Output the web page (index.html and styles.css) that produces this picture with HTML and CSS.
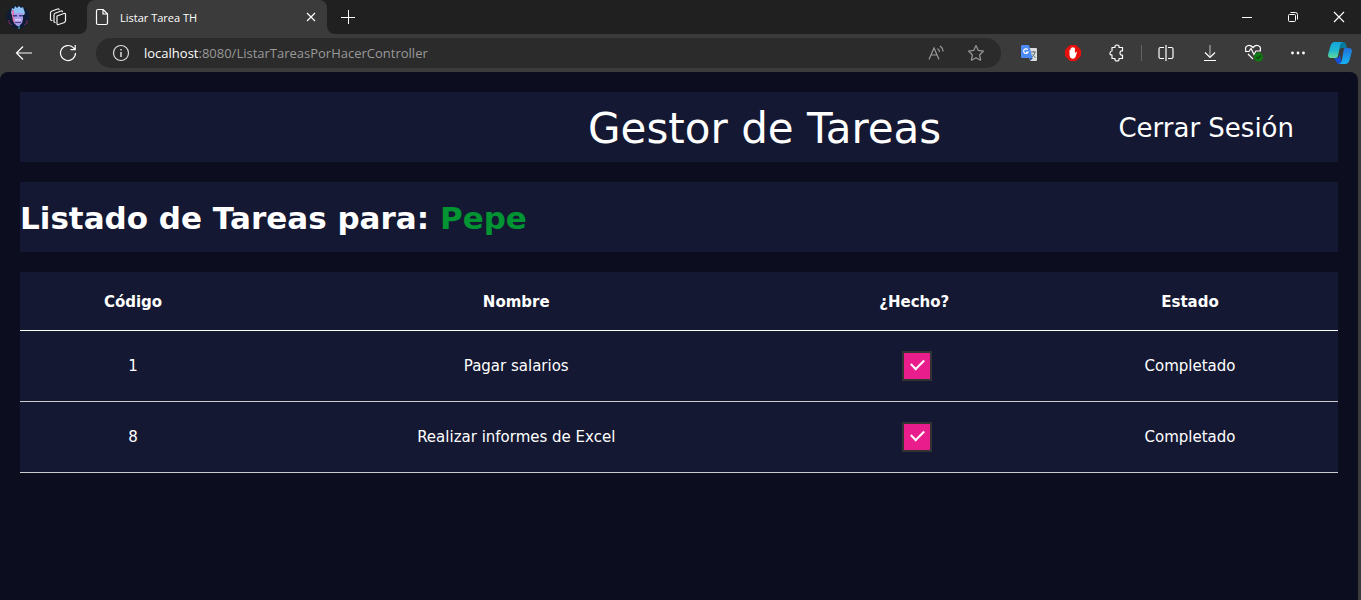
FILE: index.html
```html
<!DOCTYPE html>
<html lang="es">
<head>
<meta charset="utf-8">
<title>Listar Tarea TH</title>
<link rel="stylesheet" href="styles.css">
</head>
<body>
<div class="browser">
  <div class="tabstrip">
    <div class="tabstrip-start">
      <button class="icon-btn" aria-label="Perfil">
        <svg width="24" height="24" viewBox="0 0 24 24"><circle cx="12" cy="12" r="11.5" fill="#101c35"/><path d="M5 8 6 3l2 1 1-3 2 2 2-2 2 2 2-1 1 3 1 3-1 2H6Z" fill="#8fc0f4"/><path d="M7 8h10v6l-1 4-3 3h-2l-3-3-1-4Z" fill="#a99be8"/><path d="M6 5h2v8l1 5-2-2-1-5Z" fill="#df76b0"/><path d="M7 10h4v1.500H7ZM13 10h4v1.500h-4Z" fill="#3b3f88"/><path d="M9 14h6v1.500H9Z" fill="#dccfff"/><path d="M9 17h6v1H9Z" fill="#4b3d89"/><path d="M3 15v3l3 2M21 15v3l-3 2" stroke="#7a3158" fill="none"/><path d="M13 20v4" stroke="#43bde6"/></svg>
      </button>
      <button class="icon-btn" aria-label="Espacios de trabajo">
        <svg width="18" height="18" viewBox="0 0 18 18" fill="none" stroke="#f4f4f4" stroke-width="1.2" stroke-linejoin="round" stroke-linecap="round"><path d="m8 8 7-2.500q1.500-.4 1.500 1V13l-1 1.500-6 2q-1.500.4-1.500-1Z"/><path d="M6 14.500 5 14V7q0-1.300 1-1.800L12 3q1-.4 1.500.6"/><path d="M3 12.500 1.500 12V5q0-1.300 1-1.800L8.500 1q1-.4 1.700.5"/></svg>
      </button>
    </div>
    <div class="tab">
      <svg width="14" height="18" viewBox="0 0 14 18" fill="none" stroke="#fff" stroke-width="1.2" stroke-linejoin="round"><path d="M3 1.500h5L12.500 6v9q0 1.500-1.500 1.500H3q-1.500 0-1.500-1.500V3Q1.500 1.500 3 1.500Z"/><path d="M8 1.500V6h4.500"/></svg>
      <span class="tab-title">Listar Tarea TH</span>
      <button class="icon-btn" aria-label="Cerrar pestaña">
        <svg width="10" height="10" viewBox="0 0 10 10" stroke="#fff" stroke-width="1.200"><path d="m1 1 8 8M9 1 1 9"/></svg>
      </button>
    </div>
    <button class="icon-btn new-tab" aria-label="Nueva pestaña">
      <svg width="14" height="14" viewBox="0 0 14 14" stroke="#fff"><path d="M0 7.500h14M7.500 0v14"/></svg>
    </button>
    <div class="window-buttons">
      <button class="icon-btn" aria-label="Minimizar"><svg width="12" height="12" viewBox="0 0 12 12" stroke="#fff"><path d="M1 6.500h10"/></svg></button>
      <button class="icon-btn" aria-label="Restaurar"><svg width="12" height="12" viewBox="0 0 12 12" fill="none" stroke="#fff"><rect x="1.500" y="3.500" width="7" height="7" rx="1"/><path d="M3.500 1.500h5q2 0 2 2v5"/></svg></button>
      <button class="icon-btn" aria-label="Cerrar"><svg width="12" height="12" viewBox="0 0 12 12" stroke="#fff" stroke-width="1.200"><path d="m1 1 10 10M11 1 1 11"/></svg></button>
    </div>
  </div>

  <div class="toolbar">
    <button class="icon-btn" aria-label="Atrás"><svg width="18" height="16" viewBox="0 0 18 16" fill="none" stroke="#fff" stroke-width="1.200"><path d="M1.500 8H17M8 1.500 1.500 8 8 14.500"/></svg></button>
    <button class="icon-btn" aria-label="Actualizar"><svg width="18" height="18" viewBox="0 0 18 18" fill="none" stroke="#fff" stroke-width="1.200"><path d="M16.500 9A7.500 7.500 0 1 1 14.300 3.700L16 5.500M16.200 1v4.700h-4.700"/></svg></button>
    <div class="address">
      <svg width="18" height="18" viewBox="0 0 18 18" fill="none" stroke="#ddd" stroke-width="1.200"><circle cx="9" cy="9" r="7.500"/><path d="M9 8v5M9 5v1.500" stroke-width="1.500"/></svg>
      <span class="url"><span class="host">localhost</span>:8080/ListarTareasPorHacerController</span>
      <button class="icon-btn" aria-label="Leer en voz alta"><svg width="16" height="16" viewBox="0 0 16 16" fill="none" stroke="#999" stroke-width="1.200"><path d="M1 14.500 6 3l5 11.500M3 10h6M9.500 3.500q2 1.200 2 3.500M12 1q3 2 3 5.500"/></svg></button>
      <button class="icon-btn" aria-label="Favoritos"><svg width="18" height="18" viewBox="0 0 18 18" fill="none" stroke="#999" stroke-width="1.200" stroke-linejoin="round"><path d="m9 1.500 2.300 4.900 5.200.7-3.800 3.700.9 5.400L9 13.700l-4.600 2.500.9-5.400-3.800-3.700 5.200-.7Z"/></svg></button>
    </div>
    <div class="extensions">
      <button class="icon-btn" aria-label="Traductor"><svg width="16" height="16" viewBox="0 0 16 16"><path d="M7 3h8q1 0 1 1v11q0 1-1 1H9Z" fill="#dcdcdc"/><path d="M1 0h7l3.500 13H1q-1 0-1-1V1q0-1 1-1Z" fill="#4c8bf5"/><path d="m9 13 3 0-3 3Z" fill="#2851b4"/><path d="M6.800 4.700A2.300 2.300 0 1 0 7 7.200H5" fill="none" stroke="#fff" stroke-width="1.200"/><path d="M10 7h5M12.500 6v1M14 7q-.5 3-3 5M11.500 9l3 4" stroke="#63747c" fill="none"/></svg></button>
      <button class="icon-btn" aria-label="Bloqueador"><svg width="16" height="16" viewBox="0 0 16 16"><path d="M5 0h6l5 5v6l-5 5H5l-5-5V5Z" fill="#e8100c"/><path d="M4.500 9V5q.7-.8 1.300 0V3q.7-.8 1.300 0V2.400q.8-.8 1.400 0V3q.8-.8 1.400 0v5.500l1-1.500q1-.4 1 .4L10.500 12q-1 2-3 1.700Q4.500 13.500 4.500 9Z" fill="#fff"/></svg></button>
      <button class="icon-btn" aria-label="Extensiones"><svg width="16" height="18" viewBox="0 0 16 18" fill="none" stroke="#fff" stroke-width="1.200" stroke-linejoin="round"><path d="M3 3.500h3q-.5-2.500 2-2.500t2 2.500h3.500V7q-2.500-.5-2.500 2t2.500 2v3.500H10q.5 2.500-2 2.500t-2-2.500H3V11Q.7 11 1 9t2-2Z"/></svg></button>
    </div>
    <div class="tools">
      <button class="icon-btn" aria-label="Pantalla dividida"><svg width="16" height="16" viewBox="0 0 16 16" fill="none" stroke="#fff" stroke-width="1.200"><path d="M6 2.500H2.500Q1 2.500 1 4v8q0 1.500 1.500 1.500H6M10 2.500h3.500Q15 2.500 15 4v8q0 1.500-1.500 1.500H10M8 0v16"/></svg></button>
      <button class="icon-btn" aria-label="Descargas"><svg width="14" height="18" viewBox="0 0 14 18" fill="none" stroke="#fff" stroke-width="1.200"><path d="M7 1v12" stroke="#aaa"/><path d="m2 8.500 5 5 5-5M1 16.500h12"/></svg></button>
      <button class="icon-btn" aria-label="Rendimiento"><svg width="20" height="18" viewBox="0 0 20 18" fill="none" stroke="#fff" stroke-width="1.200"><path d="M2 7Q.5 3 3.500 1.700 6.500.7 9 3.500 11.500.7 14.500 1.700 17.500 3 16 7M1 7.500h4l2-3 3 6 2-3.500h5M4 10l5 5"/><circle cx="14.500" cy="13" r="4.500" fill="#0f7b12" stroke="none"/><path d="m12.500 13 1.500 1.500 3-3" stroke="#153d18"/></svg></button>
      <button class="icon-btn" aria-label="Más"><svg width="16" height="4" viewBox="0 0 16 4" fill="#fff"><circle cx="2.500" cy="2" r="1.400"/><circle cx="8" cy="2" r="1.400"/><circle cx="13.500" cy="2" r="1.400"/></svg></button>
      <button class="icon-btn" aria-label="Copilot">
        <svg width="24" height="22" viewBox="0 0 24 22"><defs><linearGradient id="ca" x2="0" y2="1"><stop stop-color="#11a5df"/><stop offset=".55" stop-color="#22b9cf"/><stop offset="1" stop-color="#61da94"/></linearGradient><linearGradient id="cb" x2="0" y2="1"><stop stop-color="#2170d8"/><stop offset="1" stop-color="#15b5f5"/></linearGradient></defs><path d="M13 0h2q2.500 0 3.200 3l.8 3h-5q-2 0-2.600 2Z" fill="#077a9e"/><path d="M6 16h4l2-3 2 9h-3q-2 0-3-3Z" fill="#1750d8"/><path d="M7 0h8q-2 0-2.700 3L10 14q-.6 2-2.500 2H3q-3.500 0-2.800-4L2.500 4Q3.500 0 7 0Z" fill="url(#ca)"/><path d="M17 6h4q3.500 0 2.800 4l-2.300 8q-1 4-4.500 4h-6q2 0 2.700-3l2-11Q16 6 17 6Z" fill="url(#cb)"/></svg>
      </button>
    </div>
  </div>

  <main class="page">
    <header class="panel banner">
      <h1 class="banner-title">Gestor de Tareas</h1>
      <a class="logout" href="#">Cerrar Sesión</a>
    </header>
    <section class="panel greeting">
      <h2 class="greeting-title">Listado de Tareas para: <span class="user">Pepe</span></h2>
    </section>
    <table class="tasks">
      <colgroup><col class="col-code"><col class="col-name"><col class="col-done"><col class="col-state"></colgroup>
      <thead>
        <tr><th>Código</th><th>Nombre</th><th>¿Hecho?</th><th>Estado</th></tr>
      </thead>
      <tbody>
        <tr><td>1</td><td>Pagar salarios</td><td><input class="check" type="checkbox" aria-label="Pagar salarios hecho" checked></td><td>Completado</td></tr>
        <tr><td>8</td><td>Realizar informes de Excel</td><td><input class="check" type="checkbox" aria-label="Realizar informes de Excel hecho" checked></td><td>Completado</td></tr>
      </tbody>
    </table>
  </main>
</div>
</body>
</html>
```
FILE: styles.css
```css
* { box-sizing: border-box; }

body {
  margin: 0;
  background: #3b3b3b;
  color: #fff;
  font-family: Verdana, "DejaVu Sans", sans-serif;
}

.browser {
  display: flex;
  flex-direction: column;
  min-height: 100vh;
}

.icon-btn {
  display: flex;
  align-items: center;
  justify-content: center;
  padding: 0;
  border: 0;
  background: none;
}

/* Tab strip */
.tabstrip {
  display: flex;
  height: 34px;
  background: #3b3b3b;
  font-family: "Segoe UI", "Open Sans", sans-serif;
}

.tabstrip-start {
  display: flex;
  align-items: center;
  gap: 19px;
  width: 87px;
  padding-left: 6px;
  background: #202020;
  border-bottom-right-radius: 8px;
}

.tab {
  display: flex;
  align-items: center;
  gap: 11px;
  width: 240px;
  padding: 0 11px 0 8px;
  background: #3b3b3b;
  border-radius: 8px 8px 0 0;
  box-shadow: 0 -8px 0 8px #202020;
  clip-path: inset(0);
}

.tab-title {
  flex: 1;
  font-size: 11px;
}

.new-tab {
  width: 42px;
  background: #202020;
  border-bottom-left-radius: 8px;
}

.window-buttons {
  display: flex;
  flex: 1;
  justify-content: flex-end;
  gap: 34px;
  padding-right: 16px;
  background: #202020;
}

/* Toolbar */
.toolbar {
  display: flex;
  align-items: center;
  gap: 26px;
  height: 38px;
  padding: 0 9px 0 15px;
  font-family: "Segoe UI", "Open Sans", sans-serif;
}

.address {
  display: flex;
  flex: 1;
  align-items: center;
  gap: 14px;
  height: 30px;
  margin-left: -7px;
  padding: 0 16px;
  border-radius: 15px;
  background: #2b2b2b;
}

.url {
  flex: 1;
  color: #999;
  font-size: 13px;
}

.host { color: #fff; }

.address .icon-btn + .icon-btn { margin-left: 9px; }

.extensions {
  display: flex;
  align-items: center;
  gap: 28px;
  margin-left: -6px;
}

.tools {
  display: flex;
  align-items: center;
  gap: 24px;
  height: 16px;
  margin-left: -10px;
  padding-left: 14px;
  border-left: 1px solid #626262;
}

.tools .icon-btn { min-width: 20px; }

.tools .icon-btn:last-child { margin-left: -4px; }

/* Page content */
.page {
  flex: 1;
  margin-right: 3px;
  padding: 20px;
  border-radius: 8px 8px 0 0;
  background: #0c0d1f;
}

.panel {
  min-height: 70px;
  margin-bottom: 20px;
  padding-top: 2px;
  background: #141832;
}

.banner {
  display: grid;
  grid-template-columns: 33fr 47fr 20fr;
  align-items: center;
}

.banner-title {
  grid-column: 2;
  margin: 0;
  font-size: 42px;
  font-weight: 400;
  text-align: center;
}

.logout {
  color: #fff;
  font-size: 26px;
  text-align: center;
  text-decoration: none;
}

.greeting {
  display: flex;
  align-items: center;
}

.greeting-title {
  margin: 0;
  font-size: 31px;
}

.user { color: #009432; }

.tasks {
  width: 100%;
  border-collapse: collapse;
  table-layout: fixed;
  background: #141832;
  font-size: 15px;
  line-height: 18px;
  text-align: center;
}

.col-code { width: 17%; }
.col-name { width: 41%; }
.col-done { width: 20%; }
.col-state { width: 22%; }

.tasks th,
.tasks td {
  padding: 20px 18px 20px 20px;
  border-bottom: 1px solid #ccc;
}

.tasks th {
  padding-top: 21px;
  padding-bottom: 19px;
  border-bottom-color: #fff;
}

.tasks th:nth-child(2),
.tasks td:nth-child(2) { padding-right: 16px; }

.tasks th:nth-child(3),
.tasks td:nth-child(3) { padding-right: 24px; }

.tasks th:last-child,
.tasks td:last-child { padding-right: 26px; }

.check {
  display: inline-grid;
  place-items: center;
  width: 30px;
  height: 30px;
  margin: 0 0 0 6px;
  border: 2px solid #333;
  background: #e91e8c;
  vertical-align: middle;
  appearance: none;
}

.check:checked::before {
  content: "";
  width: 11px;
  height: 6px;
  margin-bottom: 7px;
  border: solid #fff;
  border-width: 0 0 2px 2px;
  transform: rotate(-45deg);
}
```
